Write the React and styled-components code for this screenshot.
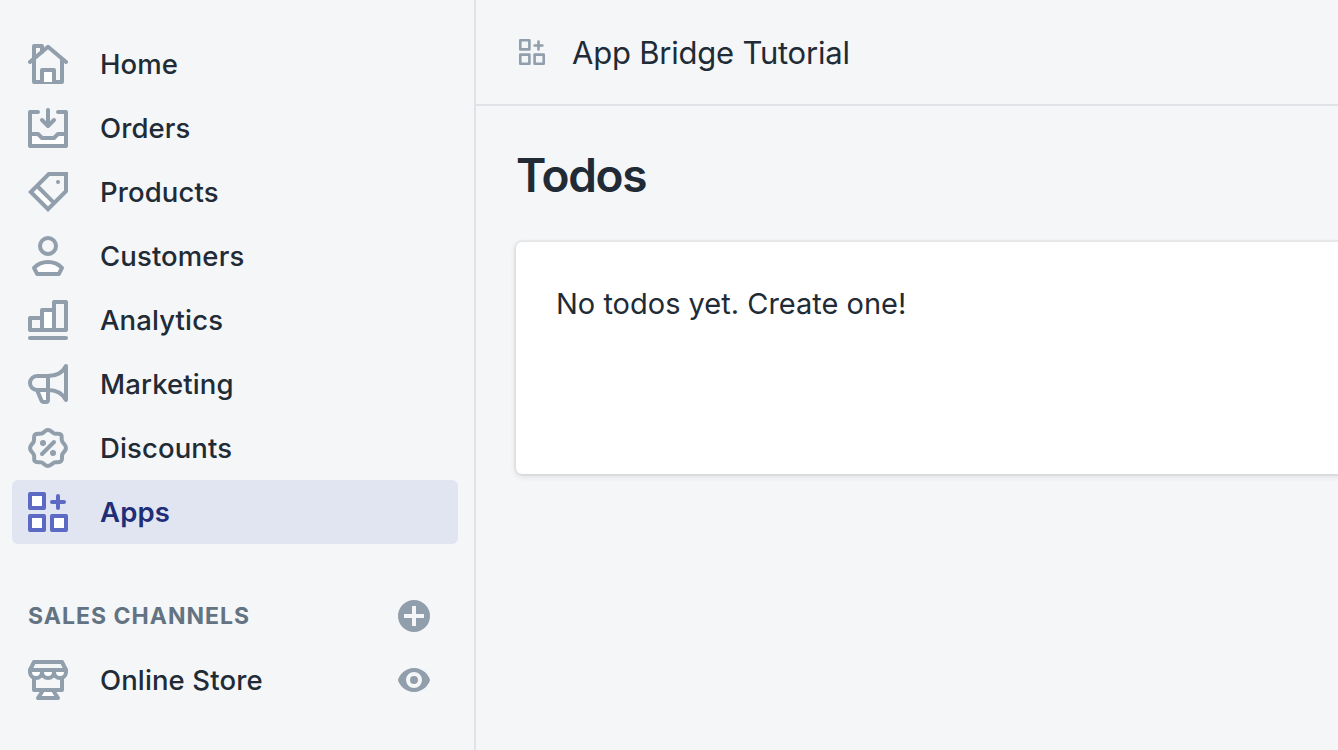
import React from 'react';
import styled, { createGlobalStyle } from 'styled-components';

const GlobalStyle = createGlobalStyle`
  *, *::before, *::after { box-sizing: border-box; }
  body {
    margin: 0;
    background: #f4f6f8;
    color: #212b36;
    font-family: Inter, "Noto Sans", sans-serif;
    -webkit-font-smoothing: antialiased;
  }
`;

const Frame = styled.div`
  display: flex;
  width: 100%;
  height: 750px;
  overflow: hidden;
`;

const Sidebar = styled.nav`
  flex: none;
  width: 476px;
  padding: 32px 16px 0 12px;
  border-right: 2px solid #dfe3e8;
`;

const NavItem = styled.a`
  display: flex;
  align-items: center;
  height: 64px;
  padding: 0 28px 0 16px;
  border-radius: 6px;
  color: ${(p) => (p.$active ? '#202e78' : '#212b36')};
  background: ${(p) => (p.$active ? '#e1e5f1' : 'transparent')};
  font-size: 27.5px;
  line-height: 40px;
  font-weight: ${(p) => (p.$active ? 600 : 500)};
  letter-spacing: 0.12px;
`;

const NavLabel = styled.span`
  flex: 1;
  margin-left: 32px;
  white-space: nowrap;
`;

const SectionHeader = styled.div`
  display: flex;
  align-items: center;
  justify-content: space-between;
  height: 64px;
  margin-top: 40px;
  padding: 0 28px 0 16px;
`;

const SectionTitle = styled.h2`
  margin: 0;
  color: #637381;
  font-size: 23px;
  line-height: 32px;
  font-weight: 700;
  letter-spacing: 1.02px;
  text-transform: uppercase;
`;

const Glyph = styled.svg`
  flex: none;
  display: block;
  width: ${(p) => p.$size || 40}px;
  height: ${(p) => p.$size || 40}px;
  fill: none;
  stroke: ${(p) => (p.$active ? '#5c6ac4' : '#919eab')};
  stroke-width: 2;
  stroke-linecap: round;
  stroke-linejoin: round;
`;

const SolidGlyph = styled.svg`
  flex: none;
  display: block;
  width: 32px;
  height: 32px;
  fill: #919eab;
`;

const Main = styled.main`
  flex: 1;
  min-width: 0;
`;

const TitleBar = styled.header`
  display: flex;
  align-items: center;
  gap: 27px;
  height: 106px;
  padding-left: 43px;
  border-bottom: 2px solid #dfe3e8;
`;

const AppName = styled.h1`
  margin: 0;
  padding-top: 2px;
  font-size: 31px;
  line-height: 40px;
  font-weight: 400;
  letter-spacing: -0.22px;
`;

const Page = styled.section`
  width: 900px;
  padding: 41px 0 0 40px;
`;

const PageTitle = styled.h2`
  margin: 0 0 39px;
  font-size: 46px;
  line-height: 56px;
  font-weight: 600;
  letter-spacing: -1.3px;
`;

const Card = styled.div`
  height: 232px;
  padding: 42px 40px 40px;
  border-radius: 6px;
  background: #fff;
  box-shadow: 0 0 0 2px rgba(63, 63, 68, 0.05), 0 2px 6px 0 rgba(63, 63, 68, 0.15);
`;

const CardText = styled.p`
  margin: 0;
  font-size: 29px;
  line-height: 40px;
  font-weight: 400;
`;

const HomeIcon = () => (
  <>
    <path d="M3 8V1h4v3M3 8v11h14V8" />
    <path fill="#fff" d="M7 19v-6h6v6" />
    <path d="M1 9l9-7.6L19 9" />
  </>
);

const OrdersIcon = () => (
  <>
    <path fill="#fff" stroke="none" d="M1 13h4l2 2h6l2-2h4v6H1z" />
    <path d="M5 2H1v17h18V2h-4M1 13h4l2 2h6l2-2h4M10 1v8M7 6l3 3 3-3" />
  </>
);

const ProductsIcon = () => (
  <>
    <path fill="#fff" stroke="none" d="M1.4 10l3-3 8.6 8.6-3 3z" />
    <path strokeLinejoin="miter" d="M10.4 1H19v8.6l-9 9L1.4 10zM4.6 7l8.4 8.4" />
    <circle cx="15" cy="5" r="1" fill="#919eab" stroke="none" />
  </>
);

const CustomersIcon = () => (
  <>
    <circle cx="10" cy="5" r="4" />
    <path fill="#fff" d="M4.6 19L3 15.9C4.9 14 7.4 13 10 13s5.1 1 7 2.9L15.4 19z" />
  </>
);

const AnalyticsIcon = () => (
  <>
    <path d="M1 9h6v6H1zM13 1h6v14h-6z" />
    <path fill="#fff" d="M7 5h6v10H7z" />
    <path d="M1 19h18" />
  </>
);

const MarketingIcon = () => (
  <>
    <path fill="#fff" d="M4.7 13.4L6.6 18c.3.7.8 1 1.4 1h1c.6 0 1-.4 1-1v-5" />
    <path d="M19 1c-1.6 3.2-5 5-9 5H4.5a3.5 3.5 0 0 0 0 7H10c4 0 7.2 1.6 9 5zM10 6v7" />
  </>
);

const DiscountsIcon = () => (
  <>
    <path d="M10 1c1.5 0 2 1.5 3.3 1.8S16 2.5 16.6 3.4s-.2 2 .5 3.3S19 8.5 19 10s-1.5 2-1.9 3.3.4 2.4-.5 3.3-2.1.2-3.3.6S11.5 19 10 19s-2-1.5-3.3-1.8-2.5.3-3.3-.6.1-2.1-.5-3.3S1 11.5 1 10s1.5-2 1.9-3.300-.4-2.500.5-3.300 2.100-.3 3.300-.6S8.500 1 10 1z" />
    <path d="M7 13l6-6" />
    <circle cx="7.5" cy="7.5" r="1.5" fill="#919eab" stroke="none" />
    <circle cx="12.5" cy="12.5" r="1.5" fill="#919eab" stroke="none" />
  </>
);

const AppsIcon = ({ inner = '#fff' }) => (
  <>
    <path fill={inner} d="M1 1h7v7H1zM1 12h7v7H1zM12 12h7v7h-7z" />
    <path d="M15 2v6M12 5h6" />
  </>
);

const StoreIcon = () => (
  <>
    <path d="M3 9v6h14V9" />
    <path fill="#fff" d="M7 16l-2 3h10l-2-3" />
    <path d="M1 5l2-4h14l2 4z" />
    <path fill="#fff" d="M1 5h18v1c0 1.7-1.3 3-3 3s-3-1.3-3-3c0 1.7-1.3 3-3 3S7 7.7 7 6c0 1.7-1.3 3-3 3S1 7.7 1 6z" />
  </>
);

const items = [
  { label: 'Home', Icon: HomeIcon },
  { label: 'Orders', Icon: OrdersIcon },
  { label: 'Products', Icon: ProductsIcon },
  { label: 'Customers', Icon: CustomersIcon },
  { label: 'Analytics', Icon: AnalyticsIcon },
  { label: 'Marketing', Icon: MarketingIcon },
  { label: 'Discounts', Icon: DiscountsIcon },
  { label: 'Apps', Icon: AppsIcon, active: true },
];

export default function App() {
  return (
    <Frame>
      <GlobalStyle />
      <Sidebar>
        {items.map(({ label, Icon, active }) => (
          <NavItem key={label} $active={active}>
            <Glyph viewBox="0 0 20 20" $active={active}><Icon /></Glyph>
            <NavLabel>{label}</NavLabel>
          </NavItem>
        ))}
        <SectionHeader>
          <SectionTitle>Sales channels</SectionTitle>
          <SolidGlyph viewBox="0 0 16 16">
            <path fillRule="evenodd" d="M8 0a8 8 0 1 0 0 16A8 8 0 0 0 8 0zM7 3h2v4h4v2H9v4H7V9H3V7h4z" />
          </SolidGlyph>
        </SectionHeader>
        <NavItem>
          <Glyph viewBox="0 0 20 20"><StoreIcon /></Glyph>
          <NavLabel>Online Store</NavLabel>
          <SolidGlyph viewBox="0 0 16 16">
            <path fillRule="evenodd" d="M8 2C3.5 2 .8 5.5.1 7.6a1.2 1.2 0 0 0 0 .8C.8 10.5 3.5 14 8 14s7.2-3.5 7.9-5.6a1.2 1.2 0 0 0 0-.8C15.2 5.5 12.5 2 8 2zm0 2a4 4 0 1 1 0 8 4 4 0 0 1 0-8zm0 2a2 2 0 1 0 0 4 2 2 0 0 0 0-4z" />
          </SolidGlyph>
        </NavItem>
      </Sidebar>
      <Main>
        <TitleBar>
          <Glyph viewBox="0 0 20 20" $size={26}><AppsIcon inner="none" /></Glyph>
          <AppName>App Bridge Tutorial</AppName>
        </TitleBar>
        <Page>
          <PageTitle>Todos</PageTitle>
          <Card>
            <CardText>No todos yet. Create one!</CardText>
          </Card>
        </Page>
      </Main>
    </Frame>
  );
}
